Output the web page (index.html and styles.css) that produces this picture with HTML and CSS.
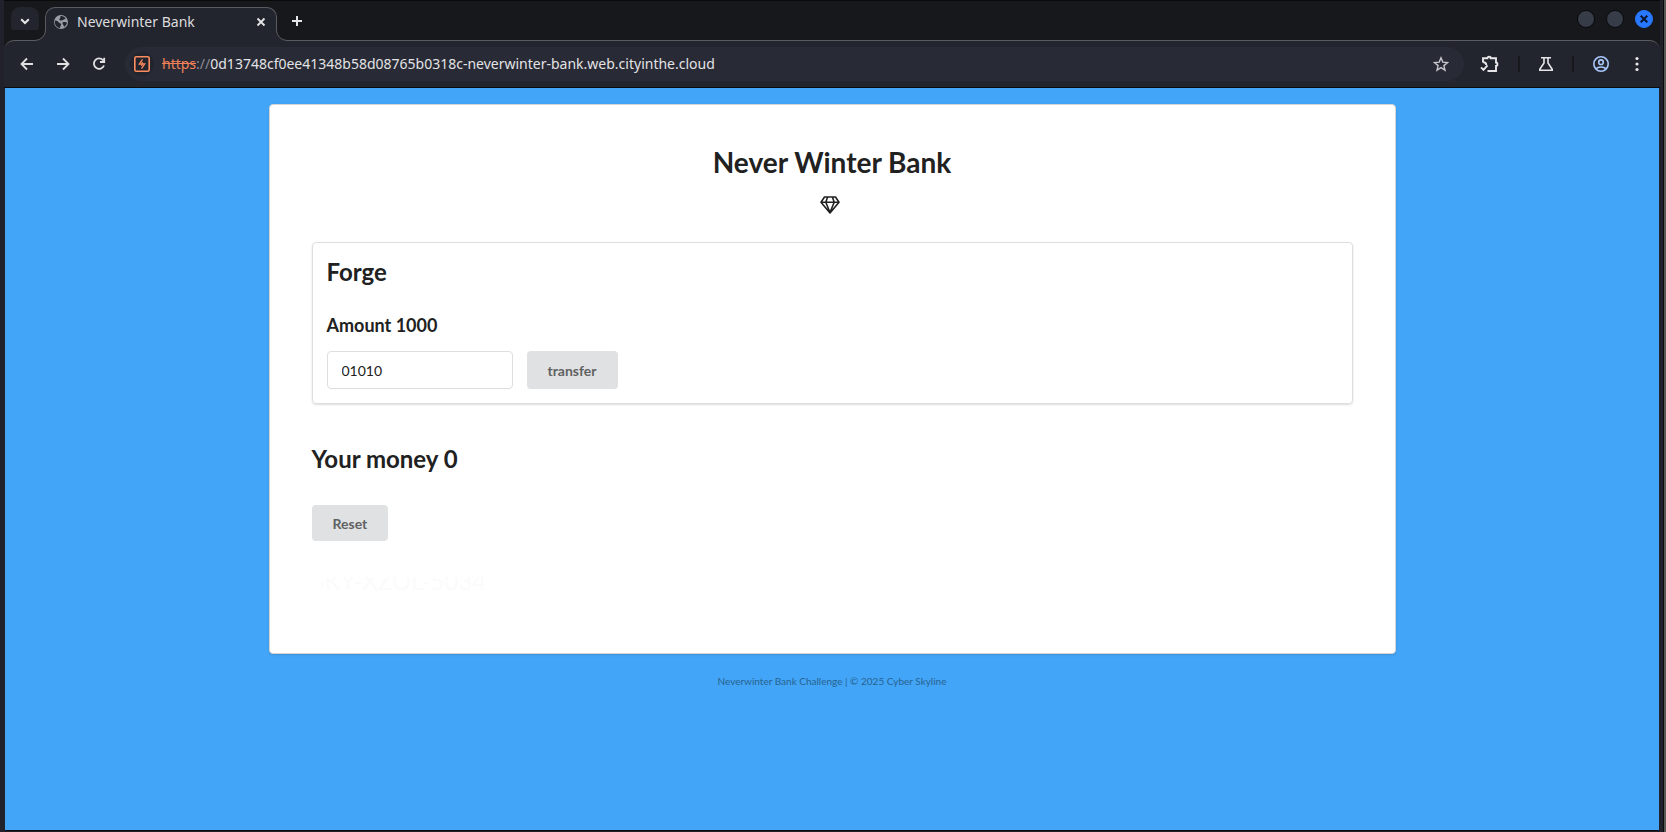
FILE: index.html
```html
<!DOCTYPE html>
<html lang="en">
<head>
<meta charset="utf-8">
<title>Neverwinter Bank</title>
<link rel="stylesheet" href="styles.css">
</head>
<body>
<div class="window">
  <header class="tabstrip">
    <button class="tab-search" aria-label="Search tabs"><svg width="12" height="12" viewBox="0 0 12 12" fill="none" stroke="#e6e6e8" stroke-width="2"><path d="M2.2 4.2 6 8l3.800-3.800"/></svg></button>
    <div class="tab">
      <svg class="flare flare-left" width="11" height="11" viewBox="0 0 11 11"><path d="M11 0v11H0v-1A10.500 10.500 0 0 0 10.500 0z" fill="#23252e"/><path d="M0 10.500A10.500 10.500 0 0 0 10.500 0" fill="none" stroke="#595b61"/></svg>
      <svg class="favicon" width="16" height="16" viewBox="0 0 16 16"><circle cx="8" cy="8" r="7" fill="#9a9da6"/><path d="M2 6.500c2 0 3 .8 3.500 1.700S8 9 8.200 10.300 7 12 7 14.200C3.500 13.500 1 10.500 2 6.500zM7.500 2.200c2-.4 4 .5 5.200 2.300-1 0-1.200 1.300-2.400 1.300S9 7 7.500 6.500 6 4.800 7.200 4.200zM9.500 8.600c1.400-.8 3.200-.6 4.500 0-.4 2.200-1.500 3.500-3 4.300.2-1.600-1.800-2.200-1.500-4.300z" fill="#23252e"/></svg>
      <span class="tab-title">Neverwinter Bank</span>
      <button class="icon-btn tab-close" aria-label="Close tab"><svg width="10" height="10" viewBox="0 0 10 10" fill="none" stroke="#e6e6e8" stroke-width="1.800"><path d="m1.500 1.500 7 7M8.500 1.500l-7 7"/></svg></button>
      <svg class="flare flare-right" width="11" height="11" viewBox="0 0 11 11"><path d="M0 0v11h11v-1A10.500 10.500 0 0 1 .5 0z" fill="#23252e"/><path d="M11 10.500A10.500 10.500 0 0 1 .5 0" fill="none" stroke="#595b61"/></svg>
    </div>
    <button class="icon-btn new-tab" aria-label="New tab"><svg width="12" height="12" viewBox="0 0 12 12" fill="none" stroke="#e6e6e8" stroke-width="2"><path d="M6 1v10M1 6h10"/></svg></button>
    <div class="window-buttons">
      <button class="dot" aria-label="Minimize"></button>
      <button class="dot" aria-label="Maximize"></button>
      <button class="dot dot-close" aria-label="Close"><svg width="8" height="8" viewBox="0 0 8 8" fill="none" stroke="#08152e" stroke-width="2"><path d="m.7.700 6.600 6.600M7.300.700.700 7.300"/></svg></button>
    </div>
  </header>
  <nav class="toolbar">
    <div class="history">
      <button class="icon-btn" aria-label="Back"><svg width="14" height="14" viewBox="0 0 14 14" fill="none" stroke="#e0e0e2" stroke-width="1.800"><path d="M13 7H2M7 1.500 1.500 7 7 12.500"/></svg></button>
      <button class="icon-btn" aria-label="Forward"><svg width="14" height="14" viewBox="0 0 14 14" fill="none" stroke="#e0e0e2" stroke-width="1.800"><path d="M1 7h11M7 1.500 12.500 7 7 12.500"/></svg></button>
      <button class="icon-btn" aria-label="Reload"><svg width="14" height="14" viewBox="0 0 14 14" fill="none" stroke="#e0e0e2" stroke-width="1.800"><path d="M11.300 3.500A5.200 5.200 0 1 0 12 8.500M12.200.800V5H8"/></svg></button>
    </div>
    <div class="address">
      <span class="site-icon"><svg width="16" height="16" viewBox="0 0 16 16" fill="none" stroke="#ff8c5f" stroke-width="1.600"><rect x=".8" y=".8" width="14.400" height="14.400" rx="1.500"/><path d="M8.500 3.400 5.200 8.200h3V6M7.500 12.600l3.300-4.800h-3V10" stroke-width="1.200"/></svg></span>
      <span class="url"><s>https</s><i>://</i>0d13748cf0ee41348b58d08765b0318c-neverwinter-bank.web.cityinthe.cloud</span>
      <button class="icon-btn star" aria-label="Bookmark"><svg width="16" height="16" viewBox="0 0 16 16" fill="none" stroke="#c4c5ca" stroke-width="1.400"><path d="m8 1.800 1.800 4.300 4.700.4-3.600 3.100 1.100 4.600L8 11.700l-4 2.500 1.100-4.600L1.500 6.500l4.700-.4z"/></svg></button>
    </div>
    <button class="icon-btn" aria-label="Extensions"><svg width="20" height="18" viewBox="0 0 20 18" fill="none" stroke="#e6e6e8" stroke-width="1.900"><path d="M3 7.500V3.200h4.300a1.700 1.400 0 0 1 3.400 0H16v4.300a1.400 1.700 0 0 1 0 3.400V16H7.500M3 7c2 .2 3.300 1.300 3.300 3M1 12.300l2.500 2.500 4-4.500"/></svg></button>
    <span class="divider"></span>
    <button class="icon-btn" aria-label="Experiments"><svg width="16" height="16" viewBox="0 0 16 16" fill="none" stroke="#e6e6e8" stroke-width="1.600"><path d="M3 1.800h10M6 2v5L1.800 13.200v1h12.400v-1L10 7V2"/></svg></button>
    <span class="divider"></span>
    <button class="icon-btn" aria-label="Profile"><svg width="18" height="18" viewBox="0 0 18 18" fill="none" stroke="#a8c7fa" stroke-width="1.600"><circle cx="9" cy="9" r="7.200"/><circle cx="9" cy="7.200" r="2.300"/><path d="M3.800 13.800c2.800-2.400 7.600-2.400 10.400 0"/></svg></button>
    <button class="icon-btn menu" aria-label="Menu"><svg width="4" height="16" viewBox="0 0 4 16" fill="#e6e6e8"><circle cx="2" cy="2.500" r="1.600"/><circle cx="2" cy="8" r="1.600"/><circle cx="2" cy="13.500" r="1.600"/></svg></button>
  </nav>
  <div class="page">
    <main class="card">
      <h1>Never Winter Bank</h1>
      <div class="gem"><svg width="20" height="18" viewBox="0 0 20 18" fill="none" stroke="#212121" stroke-width="1.600" stroke-linejoin="round"><path d="M4.500 1h11L19 6.200 10 17 1 6.200zM1 6.200h18M7.500 1.200 5.800 6.200 10 16.500l4.200-10.300-1.700-5"/></svg></div>
      <section class="forge">
        <h2>Forge</h2>
        <h3><label for="amount">Amount 1000</label></h3>
        <div class="row">
          <input id="amount" type="text" value="01010">
          <button class="btn">transfer</button>
        </div>
      </section>
      <h2 class="money">Your money 0</h2>
      <button class="btn">Reset</button>
      <div class="code"><span>SKY-XZOL-5034</span></div>
    </main>
    <footer class="footer">Neverwinter Bank Challenge | © 2025 Cyber Skyline</footer>
  </div>
</div>
</body>
</html>
```
FILE: styles.css
```css
* { box-sizing: border-box; }
body { margin: 0; background: #5a5856; }
button { font: inherit; border: 0; padding: 0; cursor: pointer; }
h1, h2, h3 { margin: 0; font-weight: 700; }

.window {
  display: flex;
  flex-direction: column;
  min-height: 100vh;
  margin-right: 2px;
  padding: 0 3px 1px 4px;
  background: #20212b;
  border-right: 1px solid #0b0b0d;
  font-family: "Noto Sans", sans-serif;
}
.tabstrip {
  display: flex;
  height: 40px;
  padding: 6px 7px 0 7px;
  background: #17181c;
  border-top: 1px solid #0a0a0b;
}
.tab-search {
  width: 28px;
  height: 28px;
  border-radius: 9px;
  background: #23252e;
  display: grid;
  place-items: center;
}
.tab {
  position: relative;
  z-index: 1;
  display: flex;
  align-items: center;
  width: 232px;
  height: 34px;
  margin-left: 6px;
  padding: 0 10px 6px 7px;
  background: #23252e;
  border: 1px solid #595b61;
  border-bottom: 0;
  border-radius: 10px 10px 0 0;
}
.flare { position: absolute; bottom: 0; }
.flare-left { left: -11px; }
.flare-right { right: -11px; }
.tab-title {
  flex: 1;
  margin-left: 8px;
  font-size: 14px;
  line-height: 20px;
  color: #dcdcde;
}
.icon-btn {
  display: grid;
  place-items: center;
  background: none;
}
.new-tab { width: 28px; height: 28px; margin-left: 6px; }
.window-buttons { display: flex; gap: 11px; margin: 3px 0 0 auto; }
.dot {
  width: 18px;
  height: 18px;
  border: 1px solid #08090b;
  border-radius: 50%;
  background: #373c49;
  display: grid;
  place-items: center;
}
.dot-close { background: #2777ff; border-color: #2777ff; }

.toolbar {
  display: flex;
  align-items: center;
  height: 48px;
  padding: 0 21px 0 16px;
  background: #23252e;
  border-top: 1px solid #595b61;
  border-bottom: 1px solid #0a0b0e;
  border-radius: 10px 10px 0 0;
  box-shadow: 0 -10px 0 #17181c;
}
.history { display: flex; gap: 22px; }
.address {
  flex: 1;
  display: flex;
  align-items: center;
  height: 34px;
  margin: 0 16px 0 19px;
  padding: 0 15px 0 5px;
  border-radius: 17px;
  background: #282a35;
}
.site-icon {
  display: grid;
  place-items: center;
  width: 24px;
  height: 24px;
  border-radius: 50%;
  background: #23252e;
}
.url {
  margin-left: 8px;
  font-size: 14px;
  line-height: 20px;
  color: #e3e3e5;
  white-space: nowrap;
}
.url s { color: #ee8159; }
.url i { font-style: normal; color: #8a8c95; }
.star { margin-left: auto; }
.divider { width: 2px; height: 16px; margin: 0 18px; background: #17181c; }
.menu { margin-left: 25px; }

.page {
  flex: 1;
  padding: 16px;
  margin: 0 1px;
  background: #42a5f7;
  border-bottom: 1px solid #0a0b0e;
  font-family: Lato, sans-serif;
  font-size: 14px;
  color: #212121;
}
.card {
  max-width: 1127px;
  margin: 0 auto;
  padding: 42px;
  background: #fff;
  border: 1px solid #d4d4d5;
  border-radius: 4px;
  box-shadow: 0 1px 2px rgba(34, 36, 38, .15);
}
h1 { font-size: 28px; line-height: 30px; text-align: center; }
.gem { display: flex; justify-content: center; padding: 19px 4px 28px 0; }
.forge {
  padding: 14px;
  border: 1px solid #dededf;
  border-radius: 4px;
  box-shadow: 0 1px 2px rgba(34, 36, 38, .15);
}
h2 { font-size: 24px; line-height: 30px; }
h3 { margin: 27px 0 15px; font-size: 18px; line-height: 22px; }
.row { display: flex; gap: 14px; }
input {
  width: 186px;
  height: 38px;
  padding: 0 14px;
  border: 1px solid #dededf;
  border-radius: 4px;
  background: #fff;
  font: inherit;
  color: #212121;
}
.btn {
  min-height: 36px;
  padding: 0 21px;
  border-radius: 4px;
  background: #e0e1e2;
  color: #606162;
  font-weight: 700;
}
.money { margin: 40px 0 31px; }
.code {
  display: flex;
  align-items: flex-end;
  height: 20px;
  margin: 36px 0 14px 9px;
  overflow: hidden;
  font-size: 24px;
  line-height: 32px;
  color: #fbfbfb;
}
.code span { margin-left: -9px; }
.footer {
  margin-top: 20px;
  font-size: 10px;
  line-height: 14px;
  text-align: center;
  color: #28638f;
}
```
